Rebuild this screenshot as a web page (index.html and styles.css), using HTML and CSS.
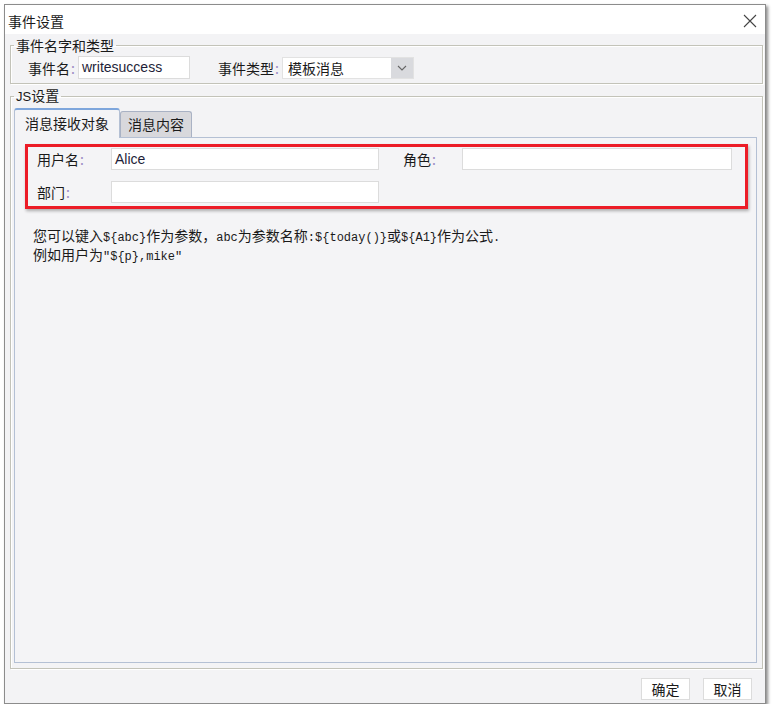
FILE: index.html
```html
<!DOCTYPE html>
<html lang="zh-CN">
<head>
<meta charset="utf-8">
<title>事件设置</title>
<link rel="stylesheet" href="styles.css">
</head>
<body>
<div class="window">
  <div class="titlebar">
    <span class="title">事件设置</span>
    <svg class="close" width="14" height="14" viewBox="0 0 14 14"><path d="M1 1 L13 13 M13 1 L1 13" stroke="#444" stroke-width="1.1" fill="none"/></svg>
  </div>
  <div class="content">
    <fieldset class="group g1">
      <legend>事件名字和类型</legend>
      <div class="row">
        <span class="label name-label">事件名<span class="colon">:</span></span>
        <div class="input name-input">writesuccess</div>
        <span class="label type-label">事件类型<span class="colon">:</span></span>
        <div class="select">
          <span class="sel-text">模板消息</span>
          <span class="sel-btn"><svg width="10" height="6" viewBox="0 0 10 6"><path d="M1 1 L5 5 L9 1" stroke="#666" stroke-width="1.1" fill="none"/></svg></span>
        </div>
      </div>
    </fieldset>
    <fieldset class="group g2">
      <legend><span class="js">JS</span>设置</legend>
      <div class="tabs">
        <div class="tab active">消息接收对象</div>
        <div class="tab">消息内容</div>
      </div>
      <div class="panel">
        <div class="highlight">
          <span class="label">用户名<span class="colon">:</span></span>
          <div class="input">Alice</div>
          <span class="label role-label">角色<span class="colon">:</span></span>
          <div class="input"></div>
          <span class="label">部门<span class="colon">:</span></span>
          <div class="input"></div>
        </div>
        <p class="help">您可以键入<span class="code">${abc}</span>作为参数，<span class="code">abc</span>为参数名称<span class="code">:${today()}</span>或<span class="code">${A1}</span>作为公式<span class="code">.</span><br>例如用户为<span class="code">"${p},mike"</span></p>
      </div>
    </fieldset>
  </div>
  <div class="footer">
    <button class="btn">确定</button>
    <button class="btn">取消</button>
  </div>
</div>
</body>
</html>
```
FILE: styles.css
```css
html, body {
  margin: 0;
  padding: 0;
  background: #ffffff;
}
body {
  font-family: "Noto Sans CJK SC", "Liberation Sans", sans-serif;
  font-size: 14px;
  color: #1a1a1a;
}
.window {
  margin: 4px 0 0 4px;
  width: 760px;
  height: 698px;
  border: 1px solid #8c8c8c;
  background: #f3f3f5;
  box-shadow: 2px 2px 3px rgba(0,0,0,0.45);
  display: flex;
  flex-direction: column;
}
.titlebar {
  height: 29px;
  background: #ffffff;
  display: flex;
  align-items: center;
  justify-content: space-between;
  padding: 0 8px 0 3px;
  flex: none;
}
.title {
  font-size: 14px;
  line-height: 18px;
  margin-top: 2px;
}
.close {
  margin-top: 2px;
}
.content {
  flex: 1;
  display: flex;
  flex-direction: column;
  padding: 2px 2px 0 5px;
  min-height: 0;
}
.group {
  margin: 0;
  padding: 0;
  border: 1px solid #c3c3b9;
  box-shadow: inset 1px 1px 0 #ffffff, 1px 1px 0 #ffffff;
  min-width: 0;
}
.group legend {
  padding: 0 2px;
  font-size: 14px;
  line-height: 18px;
  color: #1a1a1a;
}
.g1 legend {
  margin-left: -14px;
}
.g2 legend {
  margin-left: 0;
}
.js {
  font-family: "Liberation Sans", sans-serif;
  font-size: 13px;
}
.g1 {
  padding: 2px 0 4px 17px;
}
.row {
  display: flex;
  align-items: center;
  height: 23px;
}
.label {
  font-size: 14px;
  line-height: 18px;
  white-space: nowrap;
}
.colon {
  color: #9c8cc4;
  margin-left: 1px;
}
.name-label {
  width: 50px;
}
.input {
  background: #ffffff;
  border: 1px solid #dcdcdc;
  box-sizing: border-box;
  height: 22px;
  font-family: "Liberation Sans", sans-serif;
  font-size: 14px;
  line-height: 20px;
  padding: 0 3px;
  color: #1e1e38;
}
.name-input {
  width: 112px;
  height: 23px;
  line-height: 21px;
}
.type-label {
  margin-left: 28px;
  width: 64px;
}
.select {
  width: 132px;
  height: 22px;
  display: flex;
  background: #ffffff;
  border: 1px solid #e2e2e2;
  box-sizing: border-box;
}
.sel-text {
  flex: 1;
  padding-left: 5px;
  line-height: 20px;
}
.sel-btn {
  width: 22px;
  background: #d9dade;
  display: flex;
  align-items: center;
  justify-content: center;
}
.g2 {
  margin-top: 2px;
  flex: 1;
  display: flex;
  flex-direction: column;
  padding: 2px 5px 5px 3px;
}
.tabs {
  display: flex;
  align-items: flex-end;
  height: 29px;
  flex: none;
}
.tab {
  box-sizing: border-box;
  height: 26px;
  line-height: 24px;
  padding: 0 7px;
  background: #d8d8dc;
  border: 1px solid #a9b2c4;
  border-bottom: none;
  border-radius: 3px 3px 0 0;
  font-size: 14px;
}
.tab.active {
  line-height: 27px;
  padding: 0 10px;
  background: #f4f4f6;
  border-color: #b4c0d4;
  border-top: 2px solid #7ea6dc;
  position: relative;
  z-index: 1;
  margin-bottom: -1px;
  height: 30px;
}
.panel {
  flex: 1;
  border: 1px solid #b4c0d4;
  background: #f4f4f6;
  padding: 6px 0 0 10px;
}
.highlight {
  width: 708px;
  border: 3px solid #ec1c27;
  box-shadow: 1px 2px 3px rgba(0,0,0,0.3);
  display: grid;
  grid-template-columns: 74px 268px 83px 270px;
  grid-auto-rows: 22px;
  row-gap: 11px;
  align-items: center;
  padding: 1px 0 3px 9px;
}
.role-label {
  padding-left: 24px;
}
.help {
  margin: 18px 0 0 8px;
  font-size: 14px;
  line-height: 16px;
  color: #1a1a1a;
}
.code {
  font-family: "Liberation Mono", monospace;
  font-size: 12px;
}
.footer {
  height: 34px;
  flex: none;
  display: flex;
  justify-content: flex-end;
  gap: 13px;
  padding: 9px 13px 0 0;
  box-sizing: border-box;
}
.btn {
  width: 49px;
  height: 22px;
  background: #ffffff;
  border: 1px solid #dcdcdc;
  font-family: "Noto Sans CJK SC", sans-serif;
  font-size: 14px;
  line-height: 18px;
  padding: 0;
  color: #1a1a1a;
}
```
